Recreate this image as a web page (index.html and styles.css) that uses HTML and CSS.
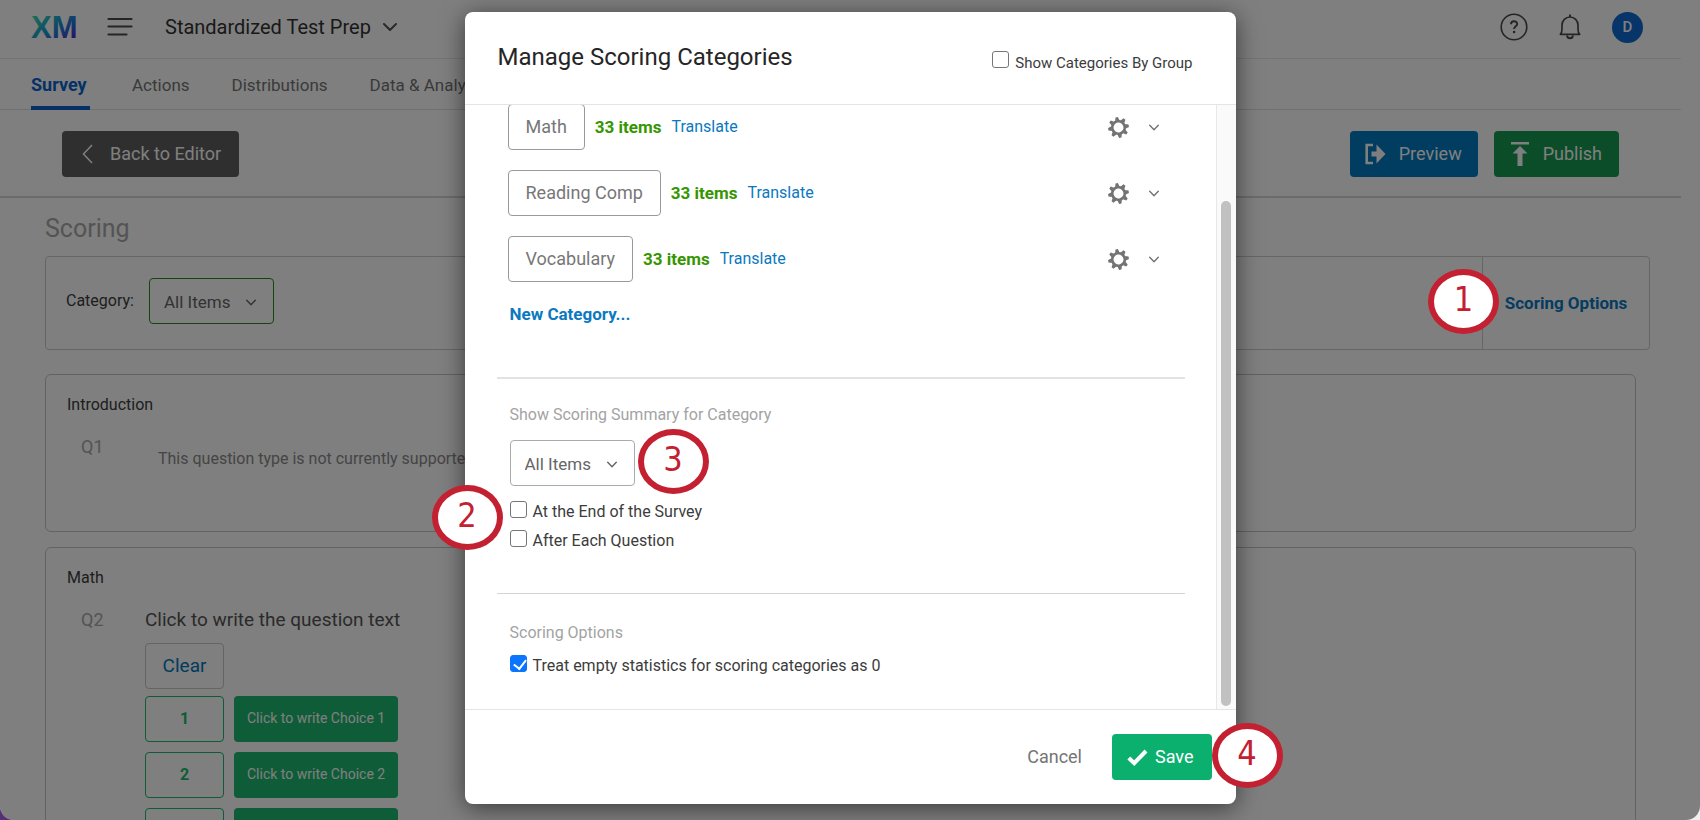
FILE: index.html
```html
<!DOCTYPE html>
<html lang="en">
<head>
<meta charset="utf-8">
<title>Standardized Test Prep – Scoring</title>
<link rel="stylesheet" href="styles.css">
</head>
<body>
<svg class="sprite" aria-hidden="true">
  <symbol id="chevron" viewBox="0 0 14 8"><path d="M1 1l6 6 6-6" fill="none" stroke="currentColor" stroke-width="2" stroke-linecap="round" stroke-linejoin="round"/></symbol>
  <symbol id="gear" viewBox="-10.5 -10.5 21 21">
    <g fill="currentColor" transform="rotate(-10)">
      <circle r="6.300" fill="none" stroke="currentColor" stroke-width="2.600"/>
      <path d="M-2.200-7L-1.200-10.400h2.400L2.200-7zM-2.200 7L-1.200 10.400h2.400L2.200 7z"/>
      <path transform="rotate(45)" d="M-2.200-7L-1.200-10.400h2.400L2.200-7zM-2.200 7L-1.200 10.400h2.400L2.200 7z"/>
      <path transform="rotate(90)" d="M-2.200-7L-1.200-10.400h2.400L2.200-7zM-2.200 7L-1.200 10.400h2.400L2.200 7z"/>
      <path transform="rotate(135)" d="M-2.200-7L-1.200-10.400h2.400L2.200-7zM-2.200 7L-1.200 10.400h2.400L2.200 7z"/>
    </g>
  </symbol>
</svg>

<div class="window">
  <div class="app">
    <header class="topbar">
      <a class="logo" href="#">
        <svg width="54" height="34" viewBox="0 0 54 34" role="img" aria-label="XM">
          <defs><linearGradient id="xm" x1="0" y1="0" x2="1" y2="1"><stop offset="0.100" stop-color="#3ddcae"/><stop offset=".45" stop-color="#1a9fd0"/><stop offset=".65" stop-color="#2a6bd8"/><stop offset=".9" stop-color="#5a1fd0"/></linearGradient></defs>
          <text class="logo-text" x="0" y="28" fill="url(#xm)">XM</text>
        </svg>
      </a>
      <button class="icon-button" aria-label="Menu">
        <svg width="26" height="20" viewBox="0 0 26 20"><path d="M1.500 2h23M1.500 9.500h23M1.500 17.500h18" stroke="currentColor" stroke-width="2.200" stroke-linecap="round"/></svg>
      </button>
      <button class="project">Standardized Test Prep <svg class="project-chevron"><use href="#chevron"/></svg></button>
      <div class="account">
        <button class="icon-button" aria-label="Help">
          <svg width="28" height="28" viewBox="0 0 28 28"><circle cx="14" cy="14" r="12.800" fill="none" stroke="currentColor" stroke-width="1.600"/><path d="M11 11.300c0-4 6.200-4 6.200-.3 0 2.400-3.100 2.300-3.100 5" fill="none" stroke="currentColor" stroke-width="1.900"/><circle cx="14.100" cy="19" r="1.300" fill="currentColor"/></svg>
        </button>
        <button class="icon-button" aria-label="Notifications">
          <svg width="24" height="28" viewBox="0 0 24 28"><path d="M2.300 21.300h19.400c-1.700-1.500-1.700-3-1.700-5.300V12a8 8 0 0 0-16 0v4c0 2.300 0 3.800-1.700 5.300z" fill="none" stroke="currentColor" stroke-width="1.700" stroke-linejoin="round"/><path d="M12 1.500v2.500M9 22.500c.5 3.600 5.500 3.600 6 0" fill="none" stroke="currentColor" stroke-width="1.900"/></svg>
        </button>
        <button class="avatar">D</button>
      </div>
    </header>

    <nav class="tabs">
      <a class="tab tab-active" href="#">Survey</a>
      <a class="tab" href="#">Actions</a>
      <a class="tab" href="#">Distributions</a>
      <a class="tab" href="#">Data &amp; Analysis</a>
    </nav>

    <div class="toolbar">
      <button class="button button-back"><svg width="11" height="20" viewBox="0 0 11 20"><path d="M10 1L1.500 10 10 19" fill="none" stroke="currentColor" stroke-width="1.500"/></svg>Back to Editor</button>
      <div class="toolbar-actions">
        <button class="button button-preview"><svg width="21" height="22" viewBox="0 0 21 22"><path d="M8 2H1.700v18H8" fill="none" stroke="currentColor" stroke-width="2.600"/><path d="M6.500 8.500h5V1.500L20.500 11l-9 9.500v-7h-5z" fill="currentColor"/></svg>Preview</button>
        <button class="button button-publish"><svg width="18" height="24" viewBox="0 0 18 24"><path d="M0 0h18v2.600H0zM9 4l7.500 7.500h-5V24h-5V11.500h-5z" fill="currentColor"/></svg>Publish</button>
      </div>
    </div>

    <main class="content">
      <h1 class="page-title">Scoring</h1>
      <section class="filter">
        <div class="filter-field">
          <label class="filter-label" for="category">Category:</label>
          <span class="select select-green"><select id="category"><option>All Items</option></select><svg class="select-chevron"><use href="#chevron"/></svg></span>
        </div>
        <a class="filter-options" href="#">Scoring Options</a>
      </section>

      <section class="block block-intro">
        <h2 class="block-title">Introduction</h2>
        <div class="question">
          <span class="question-id">Q1</span>
          <p class="question-note">This question type is not currently supported for scoring.</p>
        </div>
      </section>

      <section class="block">
        <h2 class="block-title">Math</h2>
        <div class="question">
          <span class="question-id">Q2</span>
          <div>
            <p class="question-text">Click to write the question text</p>
            <button class="clear">Clear</button>
            <div class="choices">
              <div class="choice"><button class="score">1</button><button class="choice-name">Click to write Choice 1</button></div>
              <div class="choice"><button class="score">2</button><button class="choice-name">Click to write Choice 2</button></div>
              <div class="choice"><button class="score">3</button><button class="choice-name">Click to write Choice 3</button></div>
            </div>
          </div>
        </div>
      </section>
    </main>
  </div>

  <div class="overlay">
    <span class="callout callout-1">1</span>
    <div class="modal" role="dialog" aria-labelledby="modal-title">
      <header class="modal-header">
        <h2 class="modal-title" id="modal-title">Manage Scoring Categories</h2>
        <label class="check check-group"><input type="checkbox">Show Categories By Group</label>
      </header>

      <div class="modal-body">
        <div class="modal-content">
          <div class="categories">
            <div class="category">
              <button class="category-name">Math</button><span class="item-count">33 items</span><a class="translate" href="#">Translate</a>
              <button class="category-menu" aria-label="Options for Math"><svg class="gear"><use href="#gear"/></svg><svg class="menu-chevron"><use href="#chevron"/></svg></button>
            </div>
            <div class="category">
              <button class="category-name">Reading Comp</button><span class="item-count">33 items</span><a class="translate" href="#">Translate</a>
              <button class="category-menu" aria-label="Options for Reading Comp"><svg class="gear"><use href="#gear"/></svg><svg class="menu-chevron"><use href="#chevron"/></svg></button>
            </div>
            <div class="category">
              <button class="category-name">Vocabulary</button><span class="item-count">33 items</span><a class="translate" href="#">Translate</a>
              <button class="category-menu" aria-label="Options for Vocabulary"><svg class="gear"><use href="#gear"/></svg><svg class="menu-chevron"><use href="#chevron"/></svg></button>
            </div>
            <a class="new-category" href="#">New Category...</a>
          </div>

          <section class="summary">
            <label class="section-label" for="summary-category">Show Scoring Summary for Category</label>
            <span class="select"><select id="summary-category"><option>All Items</option></select><svg class="select-chevron"><use href="#chevron"/></svg></span>
            <div class="checks">
              <label class="check"><input type="checkbox">At the End of the Survey</label>
              <label class="check"><input type="checkbox">After Each Question</label>
            </div>
          </section>

          <section class="options">
            <h3 class="section-label">Scoring Options</h3>
            <label class="check"><input type="checkbox" checked>Treat empty statistics for scoring categories as 0</label>
          </section>
        </div>
        <div class="scroll-track"><div class="scroll-thumb"></div></div>
      </div>

      <footer class="modal-footer">
        <button class="cancel">Cancel</button>
        <button class="button button-save"><svg width="21" height="17" viewBox="0 0 21 17"><path d="M1.800 9l5.400 5.200L19 2" fill="none" stroke="currentColor" stroke-width="4"/></svg>Save</button>
      </footer>

      <span class="callout callout-2">2</span>
      <span class="callout callout-3">3</span>
      <span class="callout callout-4">4</span>
    </div>
  </div>
</div>
</body>
</html>
```
FILE: styles.css
```css
* { box-sizing: border-box; }

body {
  margin: 0;
  background: linear-gradient(90deg, #573073 50%, #f0f0f0 50%);
  color: #3c3c3c;
  font: 16px/24px Roboto, "Liberation Sans", sans-serif;
}

h1, h2, h3, p { margin: 0; font-weight: 400; }
a { color: #0b79c0; text-decoration: none; }
button, select, input { margin: 0; font: inherit; color: inherit; }
button { padding: 0; border: 0; background: none; cursor: pointer; }
svg { display: block; flex: none; }
.sprite { position: absolute; width: 0; height: 0; }

.window {
  position: relative;
  height: 100vh;
  overflow: hidden;
  border-radius: 0 0 14px 14px;
  background: #fff;
}
.app { padding-right: 19px; }

/* Top bar */
.topbar {
  display: flex;
  align-items: center;
  height: 59px;
  padding: 0 38px 4px 31px;
  border-bottom: 1px solid #e8e8e8;
}
.logo-text { font: 700 31px "Liberation Sans", sans-serif; }
.icon-button { color: #4a4a4a; }
.logo + .icon-button { margin-left: 22px; }
.project {
  display: flex;
  align-items: center;
  gap: 12px;
  margin-left: 32px;
  font-size: 20px;
  color: #333;
}
.project-chevron { width: 14px; height: 8px; color: #555; }
.account { display: flex; align-items: center; gap: 30px; margin-left: auto; }
.avatar {
  width: 31px;
  height: 31px;
  border-radius: 50%;
  background: #0f6ad2;
  color: #fff;
  font-size: 15px;
  font-weight: 500;
}

.tabs {
  display: flex;
  gap: 42px;
  height: 51px;
  padding-left: 31px;
  border-bottom: 1px solid #e0e0e0;
}
.tab {
  margin-bottom: -1px;
  padding-top: 14px;
  border-bottom: 4px solid transparent;
  color: #757575;
  font-size: 17px;
}
.tab-active {
  min-width: 59px;
  border-color: #0b63ce;
  color: #0b63ce;
  font-size: 18px;
  font-weight: 700;
}

.toolbar {
  display: flex;
  justify-content: space-between;
  padding: 21px 62px 19px;
  border-bottom: 2px solid #d6d6d6;
}
.toolbar-actions { display: flex; gap: 16px; }
.button {
  display: flex;
  align-items: center;
  height: 46px;
  border-radius: 4px;
  color: #fff;
  font-size: 18px;
}
.button-back { gap: 17px; padding: 0 18px 0 20px; background: #5e5e5e; }
.button-preview { gap: 13px; padding: 0 16px 0 15px; background: #007ac0; }
.button-publish { gap: 14px; padding: 0 17px; background: #149a50; }

/* Scoring page */
.content { padding: 16px 31px 0 45px; }
.page-title { color: #a8a8a8; font-size: 25px; line-height: 30px; }
.filter {
  display: flex;
  margin-top: 12px;
  border: 1px solid #ccc;
  border-radius: 4px;
}
.filter-field {
  display: flex;
  flex: 1;
  align-items: center;
  gap: 15px;
  padding: 21px 20px 25px;
}
.filter-options {
  display: flex;
  align-items: center;
  justify-content: center;
  width: 167px;
  border-left: 1px solid #ccc;
  font-size: 17px;
  font-weight: 700;
}

.select { position: relative; display: block; width: 125px; }
.select select {
  display: block;
  width: 100%;
  height: 46px;
  padding: 2px 30px 0 14px;
  border: 1px solid #aaa;
  border-radius: 4px;
  background: transparent;
  color: #666;
  font-size: 17px;
  appearance: none;
}
.select-green select { border-color: #288a1e; }
.select-chevron {
  position: absolute;
  top: 21px;
  right: 18px;
  width: 10px;
  height: 7px;
  color: #666;
  pointer-events: none;
}

.block {
  margin: 15px 14px 0 0;
  padding: 20px 21px;
  border: 1px solid #c4c4c4;
  border-radius: 6px;
}
.block-intro { min-height: 158px; margin-top: 24px; }
.block-title { font-size: 16px; line-height: 20px; }
.question { display: flex; margin: 20px 0 0 14px; }
.question-id { width: 64px; color: #a8a8a8; font-size: 18px; }
.question-note { padding: 12px 0 0 13px; color: #8a8a8a; }
.question-text { color: #555; font-size: 19px; }
.clear, .score {
  width: 79px;
  height: 46px;
  border: 1px solid #c8c8c8;
  border-radius: 4px;
}
.clear { margin-top: 11px; color: #0079c0; font-size: 19px; }
.choices { display: grid; gap: 10px; margin-top: 7px; }
.choice { display: flex; gap: 10px; }
.score { border-color: #1eb870; color: #1eb870; font-weight: 700; }
.choice-name {
  height: 46px;
  padding: 0 13px 2px;
  border-radius: 4px;
  background: #1eb870;
  color: #fff;
  font-size: 14px;
}

/* Dialog */
.overlay {
  position: absolute;
  inset: 0;
  display: flex;
  justify-content: center;
  padding: 12px 0 16px;
  background: rgba(0, 0, 0, .5);
}
.modal {
  position: relative;
  display: flex;
  flex-direction: column;
  width: min(771px, 100% - 48px);
  border-radius: 8px;
  background: #fff;
  box-shadow: 0 4px 24px rgba(0, 0, 0, .55);
}
.modal-header {
  display: flex;
  align-items: center;
  justify-content: space-between;
  height: 93px;
  padding: 0 43px 2px 33px;
  border-bottom: 1px solid #e4e4e4;
}
.modal-title { color: #262626; font-size: 24px; line-height: 30px; }
.modal-body { display: flex; flex: 1; min-height: 0; overflow: hidden; }
.modal-content { flex: 1; padding: 0 31px 0 32px; }

.check { display: flex; align-items: flex-start; gap: 6px; }
.check-group { margin-top: 12px; font-size: 15px; }
.check input {
  flex: none;
  width: 17px;
  height: 17px;
  margin-top: 1px;
  border: 1px solid #767676;
  border-radius: 3px;
  background: #fff;
  appearance: none;
}
.check-group input { margin-top: 0; }
.check input:checked {
  border-color: #0a75ff;
  background: #0a75ff;
}
.check input:checked::after {
  content: "";
  display: block;
  width: 6px;
  height: 10px;
  margin: 1px 0 0 5px;
  border: solid #fff;
  border-width: 0 2px 2px 0;
  transform: rotate(38deg);
}

.categories { display: grid; gap: 20px; margin-top: -1px; padding-left: 11px; }
.category { display: flex; align-items: center; font-size: 16px; }
.category-name {
  height: 46px;
  padding: 0 17px;
  border: 1px solid #999;
  border-radius: 4px;
  color: #777;
  font-size: 18px;
}
.item-count { margin: 0 10px; color: #359600; font-size: 17px; font-weight: 700; }
.category-menu {
  display: flex;
  align-items: center;
  gap: 20px;
  margin: 0 26px 0 auto;
  color: #737373;
}
.gear { width: 21px; height: 21px; }
.menu-chevron { width: 10px; height: 7px; }
.new-category { padding-left: 2px; font-size: 17px; font-weight: 700; }

.summary {
  margin-top: 51px;
  padding: 24px 13px 0;
  border-top: 2px solid #e2e2e2;
}
.section-label { display: block; color: #a3a3a3; font-size: 16px; }
.summary .select { margin-top: 13px; }
.checks { display: grid; justify-items: start; gap: 5px; margin-top: 14px; }
.options {
  margin-top: 40px;
  padding: 27px 13px 0;
  border-top: 1px solid #d4d4d4;
}
.options .check { margin-top: 9px; }

.scroll-track {
  width: 20px;
  padding: 96px 5px 3px 4px;
  border-left: 1px solid #e8e8e8;
  background: #fafafa;
}
.scroll-thumb { width: 10px; height: 100%; border-radius: 5px; background: #c1c1c1; }

.modal-footer {
  display: flex;
  align-items: center;
  justify-content: flex-end;
  gap: 30px;
  padding: 24px;
  border-top: 1px solid #e4e4e4;
}
.cancel { color: #757575; font-size: 18px; }
.button-save { gap: 7px; padding: 0 18px 0 15px; background: #0bb06f; }

/* Numbered callouts */
.callout {
  position: absolute;
  z-index: 1;
  width: 71px;
  height: 65px;
  border: 6px solid #c32031;
  border-radius: 50%;
  background: #fff;
  color: #c32031;
  font: 34px/48px "DejaVu Sans Condensed", "DejaVu Sans", sans-serif;
  text-align: center;
}
.callout-1 { top: 269px; right: 201px; }
.callout-2 { top: 473px; left: -33px; }
.callout-3 { top: 417px; left: 173px; }
.callout-4 { top: 711px; right: -47px; }
```
